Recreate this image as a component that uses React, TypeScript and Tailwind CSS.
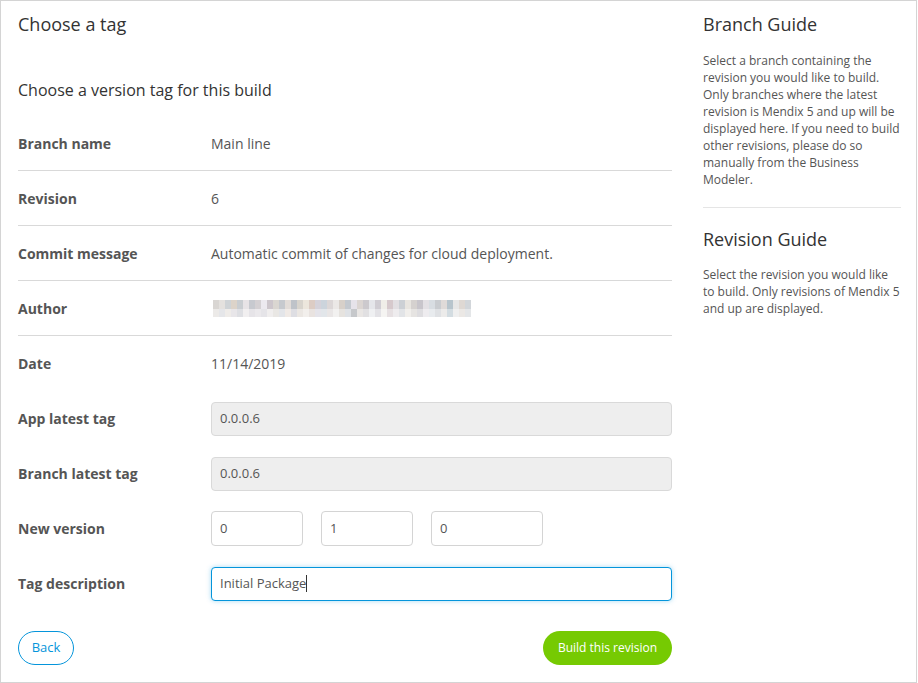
import React from "react";

const blurColors = [
  "#d9d6d3","#e4e1de","#cfd3d6","#dcd3c9","#c9cdd1","#e7e3e6","#c7c9cf","#d4d0d3","#ece9ef","#cdc6cc",
  "#dad6d1","#c6c9ce","#e2dcd8","#bfc3c9","#d8d4cd","#ece6dc","#dcccc4","#d5d2da","#ccd4dc","#dcd7d7",
  "#ebe8e6","#d7d0c9","#c4c9cf","#e6e3ea","#dbd5d2","#ccc9cd","#e5e6ea","#d0cdd3","#f0eee8","#d6c9cc",
  "#e2dfe2","#ccd0d5","#e8e5e0","#d5d1cf","#c8c5cb","#e3e0e4","#d8dde2","#c9ccd0","#dfdad8","#b7c4cc",
  "#e6e6e6","#ded8d3","#d2d6da",
];
const blurColors2 = [
  "#eceae8","#e5e6e9","#efece9","#e8e6e9","#dedfe3","#f1eff0","#e6e4e8","#ebe9ec","#e5e4e8","#f0eeee",
  "#e9e7e4","#e3e5e9","#f0eae6","#dedee3","#ebe7e3","#f2efec","#e9e3e0","#e5e4ea","#e2e6ea","#e9e6e6",
  "#f2f1f0","#e6e3df","#dfe2e6","#c6c8cb","#e9e6e4","#e1e0e2","#eff0f2","#e3e2e6","#f5f4f2","#e6e0e2",
  "#eeecee","#e2e4e7","#f1efec","#e6e4e2","#dedde0","#eeecef","#e8ebee","#dfe1e4","#ecebea","#d3dce1",
  "#efefef","#ebe8e5","#e4e6e8",
];

function Row({ label, children, border }: { label: string; children: React.ReactNode; border?: boolean }) {
  return (
    <div className={`flex items-center h-[55px] ${border ? "border-b border-[#d9d9d9]" : ""}`}>
      <div className="w-[193px] shrink-0 text-[14px] font-bold text-[#555]">{label}</div>
      <div className="flex-1 text-[14px] text-[#555]">{children}</div>
    </div>
  );
}

function ReadOnly({ value }: { value: string }) {
  return (
    <div className="h-[34px] w-[461px] rounded-[4px] border border-[#d9d9d9] bg-[#eeeeee] pl-[8px] flex items-center text-[13px] text-[#555]">
      {value}
    </div>
  );
}

function Small({ value, w }: { value: string; w: string }) {
  return (
    <div className={`h-[35px] ${w} rounded-[4px] border border-[#d4d4d4] bg-white pl-[8px] flex items-center text-[13px] text-[#555]`}>
      {value}
    </div>
  );
}

export default function App() {
  return (
    <div
      className="w-[917px] h-[683px] border border-[#d4d4d4] bg-white flex"
      style={{ fontFamily: '"Open Sans", "Noto Sans", sans-serif' }}
    >
      <div className="w-[671px] pl-[17px] pt-[12px] shrink-0">
        <div className="text-[18px] leading-[22px] text-[#333]">Choose a tag</div>
        <div className="mt-[44px] text-[16px] leading-[22px] text-[#333]">Choose a version tag for this build</div>
        <div className="mt-[15px] w-[654px]">
          <Row label="Branch name" border>Main line</Row>
          <Row label="Revision" border>6</Row>
          <Row label="Commit message" border>Automatic commit of changes for cloud deployment.</Row>
          <Row label="Author" border>
            <div className="flex flex-col ml-[2px]">
              <div className="flex">
                {blurColors.map((c, i) => (
                  <div key={i} className="w-[6px] h-[9px]" style={{ background: c }} />
                ))}
              </div>
              <div className="flex">
                {blurColors2.map((c, i) => (
                  <div key={i} className="w-[6px] h-[8px]" style={{ background: c }} />
                ))}
              </div>
            </div>
          </Row>
          <Row label="Date">11/14/2019</Row>
          <Row label="App latest tag"><ReadOnly value="0.0.0.6" /></Row>
          <Row label="Branch latest tag"><ReadOnly value="0.0.0.6" /></Row>
          <Row label="New version">
            <div className="flex gap-[18px]">
              <Small value="0" w="w-[92px]" />
              <Small value="1" w="w-[92px]" />
              <Small value="0" w="w-[112px]" />
            </div>
          </Row>
          <Row label="Tag description">
            <div className="h-[34px] w-[461px] rounded-[4px] border border-[#0595db] bg-white pl-[8px] flex items-center text-[13px] text-[#555] shadow-[0_0_5px_rgba(5,149,219,0.35)]">
              Initial Package<span className="inline-block w-[1px] h-[17px] bg-[#333]" />
            </div>
          </Row>
        </div>
        <div className="mt-[20px] w-[654px] flex justify-between">
          <button className="h-[34px] w-[56px] rounded-full border border-[#0595db] text-[13px] text-[#0595db] bg-white">
            Back
          </button>
          <button className="h-[34px] w-[129px] rounded-full bg-[#76ca02] text-[12px] text-white">
            Build this revision
          </button>
        </div>
      </div>
      <div className="ml-[31px] w-[198px] pt-[12px]">
        <div className="text-[18px] leading-[22px] text-[#333]">Branch Guide</div>
        <p className="mt-[17px] text-[12px] leading-[17px] text-[#555]">
          Select a branch containing the<br />
          revision you would like to build.<br />
          Only branches where the latest<br />
          revision is Mendix 5 and up will be<br />
          displayed here. If you need to build<br />
          other revisions, please do so<br />
          manually from the Business<br />
          Modeler.
        </p>
        <div className="mt-[19px] border-t border-[#e5e5e5]" />
        <div className="mt-[20px] text-[18px] leading-[22px] text-[#333]">Revision Guide</div>
        <p className="mt-[16px] text-[12px] leading-[17px] text-[#555]">
          Select the revision you would like<br />
          to build. Only revisions of Mendix 5<br />
          and up are displayed.
        </p>
      </div>
    </div>
  );
}
